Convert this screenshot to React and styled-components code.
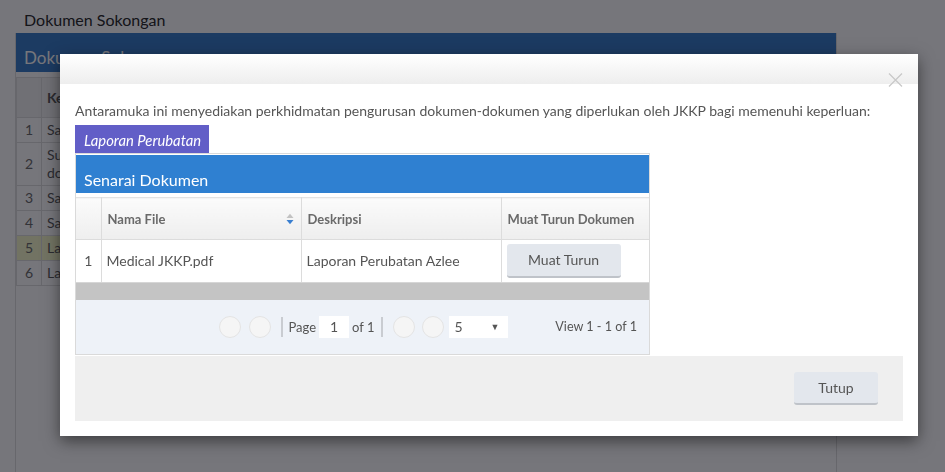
import React from 'react';
import styled, { createGlobalStyle } from 'styled-components';

const GlobalStyle = createGlobalStyle`
  html, body {
    margin: 0;
    padding: 0;
    background: #ffffff;
    font-family: Lato, "Open Sans", "Liberation Sans", sans-serif;
    color: #333;
  }
  * { box-sizing: border-box; }
`;

const
  Page = styled.div`
    height: 472px;
    overflow: hidden;
    padding: 10px 0 0 15px;
  `,
  PageTitle = styled.div`
    font-size: 16px;
    line-height: 20px;
    padding-left: 9px;
    color: #222;
  `,
  Panel = styled.div`
    width: 822px;
    height: 460px;
    margin-top: 3px;
    border: 1px solid #dcdcdc;
    border-top: none;
  `,
  PanelHeader = styled.div`
    height: 39px;
    padding: 15px 0 0 8px;
    background: #3479c6;
    color: #fff;
    font-size: 17px;
    line-height: 20px;
  `,
  PanelBody = styled.div`
    padding-top: 5px;
  `,
  BgTable = styled.table`
    width: 100%;
    border-collapse: collapse;
    font-size: 14px;
    color: #555;
    td, th {
      border: 1px solid #dedede;
      padding: 3px 5px;
      line-height: 18px;
      text-align: left;
      vertical-align: middle;
    }
  `,
  BgHead = styled.th`
    width: ${p => (p.$width ? `${p.$width}px` : 'auto')};
    height: 40px;
    background: #f1f1f1;
    font-weight: 700;
  `,
  BgRow = styled.tr`
    background: ${p => (p.$highlight ? '#f6f9c8' : '#ffffff')};
  `,
  NumCell = styled.td`
    width: 25px;
    text-align: center !important;
    color: #666;
  `,
  Backdrop = styled.div`
    position: fixed;
    inset: 0;
    background: rgba(10, 10, 20, 0.56);
  `,
  Modal = styled.div`
    position: fixed;
    left: 60px;
    top: 54px;
    width: 858px;
    background: #fff;
    box-shadow: 0 5px 15px rgba(0, 0, 0, 0.5);
  `,
  ModalHeader = styled.div`
    position: relative;
    height: 30px;
    background: linear-gradient(#ffffff, #eeeeee);
  `,
  CloseButton = styled.button`
    position: absolute;
    left: 828px;
    top: 19px;
    width: 15px;
    height: 14px;
    padding: 0;
    border: none;
    background: none;
    display: flex;
  `,
  ModalBody = styled.div`
    padding: 18px 15px 15px;
  `,
  Intro = styled.p`
    margin: 0;
    font-size: 14px;
    line-height: 18px;
    color: #555;
  `,
  Tab = styled.div`
    display: inline-block;
    margin-top: 5px;
    height: 28px;
    line-height: 30px;
    padding: 0 8px 0 9px;
    background: #625ec7;
    color: #fff;
    font-size: 14.8px;
    font-style: italic;
  `,
  Grid = styled.div`
    width: 575px;
    border: 1px solid #dadada;
    padding-top: 1px;
  `,
  Caption = styled.div`
    height: 38px;
    padding: 16px 0 0 8px;
    line-height: 18px;
    background: #2f80d1;
    color: #fff;
    font-size: 16px;
  `,
  GridTable = styled.table`
    width: 100%;
    margin-top: 4px;
    border-collapse: collapse;
    table-layout: fixed;
  `,
  Col = styled.col`
    width: ${p => (p.$width ? `${p.$width}px` : 'auto')};
  `,
  HeadCell = styled.th`
    height: 42px;
    padding: 0 6px;
    background: linear-gradient(#fbfbfb, #eeeeee);
    border-top: 1px solid #e3e3e3;
    border-right: 1px solid #dcdcdc;
    border-bottom: 1px solid #dcdcdc;
    font-size: 13px;
    font-weight: 700;
    color: #6a6a6a;
    text-align: left;
    &:last-child { border-right: none; }
  `,
  HeadInner = styled.div`
    display: flex;
    align-items: center;
    justify-content: space-between;
    padding-right: 1px;
  `,
  Cell = styled.td`
    height: 42px;
    padding: 0 5px;
    border-right: 1px solid #dcdcdc;
    font-size: 14px;
    color: #555;
    text-align: ${p => p.$align || 'left'};
    &:last-child { border-right: none; }
  `,
  Button = styled.button`
    width: ${p => p.$width}px;
    height: ${p => p.$height}px;
    border: none;
    border-bottom: 2px solid #bfc3c9;
    border-radius: 3px;
    background: #e3e7ed;
    color: #555;
    font-family: inherit;
    font-size: 14px;
    cursor: pointer;
  `,
  ScrollBar = styled.div`
    height: 18px;
    background: #c4c4c4;
    border-top: 1px solid #d6d6d6;
  `,
  Pager = styled.div`
    height: 54px;
    display: grid;
    grid-template-columns: 1fr auto 1fr;
    align-items: center;
    background: #eef2f8;
    font-size: 13px;
    color: #555;
  `,
  PagerCenter = styled.div`
    grid-column: 2;
    display: flex;
    align-items: center;
    padding-left: 2px;
  `,
  PagerRight = styled.div`
    justify-self: end;
    padding-right: 12px;
    font-size: 12.6px;
  `,
  Circle = styled.span`
    width: 22px;
    height: 22px;
    margin-right: ${p => p.$gap}px;
    border-radius: 50%;
    background: #f5f5f5;
    border: 1px solid #e4e4e4;
  `,
  Separator = styled.span`
    width: 2px;
    height: 20px;
    margin: 0 ${p => p.$right}px 0 ${p => p.$left}px;
    background: #c9ccd1;
  `,
  PageInput = styled.span`
    width: 30px;
    height: 22px;
    margin: 0 3px;
    line-height: 22px;
    text-align: center;
    background: #fff;
    font-size: 14px;
  `,
  Select = styled.span`
    width: 59px;
    height: 22px;
    display: flex;
    align-items: center;
    justify-content: space-between;
    padding: 0 8px 0 6px;
    background: #fff;
    font-size: 14px;
  `,
  Arrow = styled.span`
    font-size: 9px;
    color: #555;
  `,
  Footer = styled.div`
    height: 65px;
    margin-top: 1px;
    display: flex;
    align-items: center;
    justify-content: flex-end;
    padding: 0 25px 0 0;
    background: #efefef;
  `;

const SortIcon = () => (
  <svg width="8" height="12" viewBox="0 0 8 12">
    <path d="M0.5 5 L4 0.8 L7.5 5 Z" fill="#c2c2c2" />
    <path d="M0.5 7 L4 11.2 L7.5 7 Z" fill="#3a7fd0" />
  </svg>
);

const bgRows = [
  'Salinan kad pengenalan pemohon',
  'Surat sokongan daripada ketua jabatan dan dokumen berkaitan yang lain',
  'Salinan sijil kelahiran',
  'Salinan penyata bank',
  'Laporan perubatan',
  'Lain-lain dokumen',
];

const App = () => (
  <>
    <GlobalStyle />
    <Page>
      <PageTitle>Dokumen Sokongan</PageTitle>
      <Panel>
        <PanelHeader>Dokumen Sokongan</PanelHeader>
        <PanelBody>
          <BgTable>
            <thead>
              <tr>
                <BgHead $width={25}></BgHead>
                <BgHead $width={300}>Keterangan</BgHead>
                <BgHead>Dokumen</BgHead>
              </tr>
            </thead>
            <tbody>
              {bgRows.map((r, i) => (
                <BgRow key={i} $highlight={i === 4}>
                  <NumCell>{i + 1}</NumCell>
                  <td>{r}</td>
                  <td></td>
                </BgRow>
              ))}
            </tbody>
          </BgTable>
        </PanelBody>
      </Panel>
    </Page>

    <Backdrop />

    <Modal>
      <ModalHeader>
        <CloseButton aria-label="close">
          <svg width="15" height="14" viewBox="0 0 15 14">
            <path d="M1 0.5 L14 13.5 M14 0.5 L1 13.5" stroke="#c8c8c8" strokeWidth="1.2" />
          </svg>
        </CloseButton>
      </ModalHeader>
      <ModalBody>
        <Intro>
          Antaramuka ini menyediakan perkhidmatan pengurusan dokumen-dokumen yang diperlukan oleh JKKP bagi memenuhi keperluan:
        </Intro>
        <Tab>Laporan Perubatan</Tab>
        <Grid>
          <Caption>Senarai Dokumen</Caption>
          <GridTable>
            <colgroup>
              <Col $width={25} />
              <Col $width={200} />
              <Col $width={200} />
              <Col />
            </colgroup>
            <thead>
              <tr>
                <HeadCell></HeadCell>
                <HeadCell>
                  <HeadInner>
                    <span>Nama File</span>
                    <SortIcon />
                  </HeadInner>
                </HeadCell>
                <HeadCell>Deskripsi</HeadCell>
                <HeadCell>Muat Turun Dokumen</HeadCell>
              </tr>
            </thead>
            <tbody>
              <tr>
                <Cell $align="center">1</Cell>
                <Cell>Medical JKKP.pdf</Cell>
                <Cell>Laporan Perubatan Azlee</Cell>
                <Cell>
                  <Button $width={114} $height={34}>Muat Turun</Button>
                </Cell>
              </tr>
            </tbody>
          </GridTable>
          <ScrollBar />
          <Pager>
            <PagerCenter>
              <Circle $gap={8} />
              <Circle $gap={0} />
              <Separator $left={10} $right={5} />
              <span>Page</span>
              <PageInput>1</PageInput>
              <span>of 1</span>
              <Separator $left={6} $right={10} />
              <Circle $gap={7} />
              <Circle $gap={5} />
              <Select>
                <span>5</span>
                <Arrow>▼</Arrow>
              </Select>
            </PagerCenter>
            <PagerRight>View 1 - 1 of 1</PagerRight>
          </Pager>
        </Grid>
        <Footer>
          <Button $width={84} $height={33}>Tutup</Button>
        </Footer>
      </ModalBody>
    </Modal>
  </>
);

export default App;
